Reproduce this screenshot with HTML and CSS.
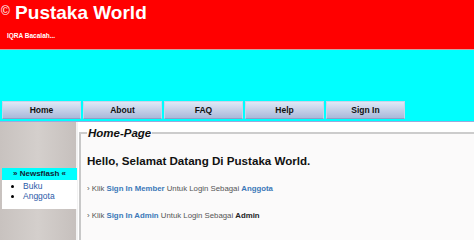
FILE: index.html
```html
<!DOCTYPE html>
<html>
<head>
<meta charset="utf-8">
<link rel="stylesheet" href="styles.css">
</head>
<body>
<div class="header">
  <div class="title"><span class="copy">©</span> Pustaka World</div>
  <div class="tagline">IQRA Bacalah...</div>
</div>
<div class="band">
  <div class="nav">
    <a class="btn">Home</a>
    <a class="btn">About</a>
    <a class="btn">FAQ</a>
    <a class="btn">Help</a>
    <a class="btn">Sign In</a>
  </div>
</div>
<div class="main">
  <div class="side">
    <div class="news">
      <div class="news-head">» Newsflash «</div>
      <ul class="news-list">
        <li><a>Buku</a></li>
        <li><a>Anggota</a></li>
      </ul>
    </div>
  </div>
  <fieldset class="content">
    <legend>Home-Page</legend>
    <h1>Hello, Selamat Datang Di Pustaka World.</h1>
    <p class="line">› Klik <b class="lnk">Sign In Member</b> Untuk Login Sebagai <b class="lnk">Anggota</b></p>
    <p class="line">› Klik <b class="lnk">Sign In Admin</b> Untuk Login Sebagai <b>Admin</b></p>
  </fieldset>
</div>
</body>
</html>
```
FILE: styles.css
```css
* { box-sizing: border-box; }
html, body { margin: 0; padding: 0; }
body { width: 474px; height: 240px; overflow: hidden; font-family: "Liberation Sans", Arial, sans-serif; background: #fff; }
.header { background: #ff0000; height: 50px; border-bottom: 1px solid #c9a5a5; color: #fff; padding: 0 0 0 1px; }
.title { font-size: 19px; font-weight: bold; line-height: 22px; }
.copy { font-size: 12px; vertical-align: 4px; font-weight: normal; }
.tagline { font-size: 6.5px; font-weight: bold; margin: 8px 0 0 6px; }
.band { background: #00ffff; height: 72px; display: flex; align-items: flex-end; padding: 0 0 2px 2px; border-bottom: 1px solid #9ad; }
.nav { display: flex; gap: 2px; }
.btn { width: 79px; height: 18px; display: flex; align-items: center; justify-content: center; font-size: 8.5px; font-weight: bold; color: #111; background: linear-gradient(#dfe8f6, #aab9da); border: 1px solid #c8d4ea; border-bottom-color: #8ea0c6; }
.main { display: flex; height: 118px; }
.side { width: 78px; background: linear-gradient(90deg, #c8c2bf, #d4cfcc 50%, #c6c0bd); padding-top: 46px; border-right: 2px solid #f2f2f2; }
.news { margin-left: 2px; width: 75px; background: #fff; padding-bottom: 8px; }
.news-head { background: #00ffff; color: #123; font-size: 8px; font-weight: bold; text-align: center; height: 12px; line-height: 12px; }
.news-list { margin: 1px 0 0; padding-left: 21px; font-size: 8.5px; line-height: 10px; }
.news-list a { color: #2a5aa8; }
.content { flex: 1; margin: 0 0 0 1px; padding: 0 0 0 6px; border: 0; border-left: 2px solid #c8c8c8; border-top: 2px solid #ccc; background: #fbfafa; position: relative; top: 5px; }
.content legend { font-size: 11.5px; font-weight: bold; font-style: italic; color: #111; padding: 0 1px; margin-left: 0; line-height: 12px; }
h1 { font-size: 11.6px; font-weight: bold; margin: 15px 0 0 0; color: #111; }
.line { font-size: 7.8px; color: #555; margin: 0; }
h1 + .line { margin-top: 17px; }
.line + .line { margin-top: 18px; }
.line b { color: #222; }
.line .lnk { color: #3a78b8; }
```
